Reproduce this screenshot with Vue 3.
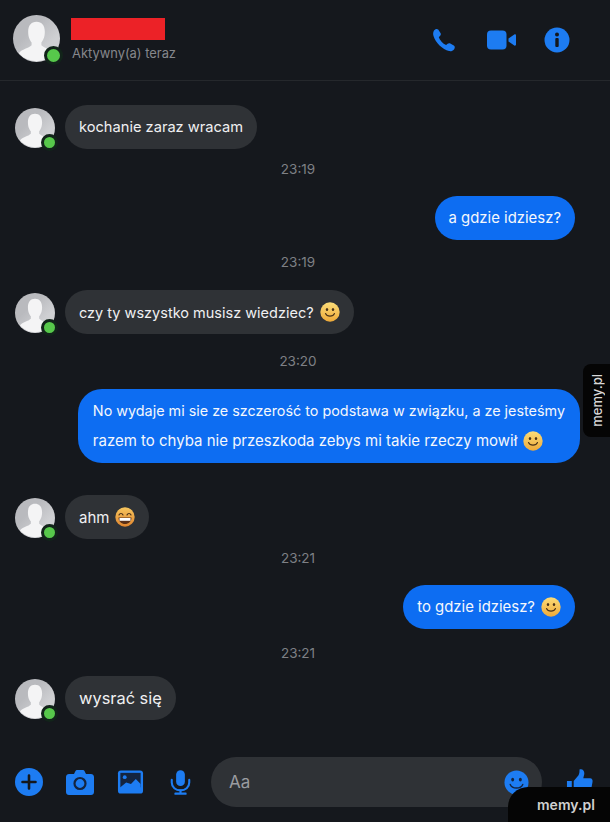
<script setup>
const messages = [
  { id: 1, type: 'in', text: 'kochanie zaraz wracam', size: 14.65, top: 24 },
  { id: 2, type: 'time', text: '23:19', top: 12 },
  { id: 3, type: 'out', text: 'a gdzie idziesz?', size: 14.9, top: 19 },
  { id: 4, type: 'time', text: '23:19', top: 14 },
  { id: 5, type: 'in', text: 'czy ty wszystko musisz wiedziec?', emoji: 'smile', size: 14.5, top: 20 },
  { id: 6, type: 'time', text: '23:20', top: 19 },
  { id: 7, type: 'out', lines: ['No wydaje mi sie ze szczerość to podstawa w związku, a ze jesteśmy', 'razem to chyba nie przeszkoda zebys mi takie rzeczy mowił'], emoji: 'smile', size: 15, firstSize: 14.36, top: 20 },
  { id: 8, type: 'in', text: 'ahm', emoji: 'grin', size: 15, top: 32 },
  { id: 9, type: 'time', text: '23:21', top: 11 },
  { id: 10, type: 'out', text: 'to gdzie idziesz?', emoji: 'smile', size: 14.9, top: 19 },
  { id: 11, type: 'time', text: '23:21', top: 16 },
  { id: 12, type: 'in', text: 'wysrać się', size: 16.4, top: 15 }
]
</script>

<template>
  <div class="screen">
    <svg class="defs" width="0" height="0">
      <defs>
        <linearGradient id="em" x1="0" y1="0" x2="0" y2="1"><stop offset="0" stop-color="#fbdc78"/><stop offset="1" stop-color="#eeaa3a"/></linearGradient>
        <linearGradient id="em2" x1="0" y1="0" x2="0" y2="1"><stop offset="0" stop-color="#f7c65e"/><stop offset="1" stop-color="#e0852e"/></linearGradient>
        <linearGradient id="sil" x1="0" y1="0" x2="1" y2="1"><stop offset="0.35" stop-color="#b9babe"/><stop offset="0.7" stop-color="#cfd0d3"/></linearGradient>
      </defs>
    </svg>
    <header class="header">
      <div class="avatar big">
        <svg viewBox="0 0 48 48" class="silhouette">
          <circle cx="24" cy="24" r="24" fill="url(#sil)" />
          <path d="M24 7c5.500 0 8.500 4 8.500 10s-2 9-3.500 11v3c3 3 10 4 13 8a24 24 0 0 1-36 0c3-4 10-5 13-8v-3c-1.500-2-3.500-5-3.500-11S18.500 7 24 7z" fill="#f4f4f5" />
        </svg>
        <span class="dot big-dot"></span>
      </div>
      <div class="who">
        <div class="redact"></div>
        <div class="status">Aktywny(a) teraz</div>
      </div>
      <div class="actions">
        <svg viewBox="0 0 26 26" class="act" fill="#1d7cf2"><path d="M3 3.500C4 2 6 1.500 7.200 2.500l2.300 3.500c.6 1 .4 2-.4 2.800L7.800 10.200c1 3 4 6.500 7.300 7.900l1.500-1.300c.8-.7 1.800-.8 2.700-.3l3.500 2.100c1.300.9 1.300 2.600.2 3.800-1.300 1.400-3 2.100-5 1.600C11.500 22.500 4.500 15.500 2.500 9c-.6-2-.4-4 .5-5.500z"/></svg>
        <svg viewBox="0 0 30 22" class="act video" fill="#1d7cf2"><rect x="0" y="1.500" width="19.500" height="19" rx="4"/><path d="M21.500 9.500l5.800-4c.8-.5 1.700 0 1.700 1v9c0 1-.9 1.500-1.700 1l-5.800-4z"/></svg>
        <svg viewBox="0 0 26 26" class="act info"><circle cx="13" cy="13" r="12.500" fill="#1d7cf2"/><circle cx="13" cy="7.600" r="2" fill="#14171c"/><rect x="11.300" y="11" width="3.400" height="9" rx="1" fill="#14171c"/></svg>
      </div>
    </header>

    <main class="chat">
      <template v-for="m in messages" :key="m.id">
        <div v-if="m.type === 'time'" class="time" :style="{ marginTop: m.top + 'px' }">{{ m.text }}</div>
        <div v-else class="row" :class="[m.type, { wide: m.lines }]" :style="{ marginTop: m.top + 'px' }">
          <div v-if="m.type === 'in'" class="avatar small">
            <svg viewBox="0 0 48 48" class="silhouette">
              <circle cx="24" cy="24" r="24" fill="url(#sil)" />
              <path d="M24 7c5.500 0 8.500 4 8.500 10s-2 9-3.500 11v3c3 3 10 4 13 8a24 24 0 0 1-36 0c3-4 10-5 13-8v-3c-1.500-2-3.500-5-3.500-11S18.500 7 24 7z" fill="#f4f4f5" />
            </svg>
            <span class="dot small-dot"></span>
          </div>
          <div class="bubble" :class="{ multi: m.lines }" :style="{ fontSize: m.size + 'px' }">
            <template v-if="m.lines">
              <div :style="{ fontSize: m.firstSize + 'px' }">{{ m.lines[0] }}</div>
              <div class="line">{{ m.lines[1] }}<svg v-if="m.emoji" class="emoji" viewBox="0 0 20 20"><circle cx="10" cy="10" r="9.700" fill="url(#em)"/><ellipse cx="7" cy="7.500" rx="1.200" ry="1.600" fill="#4a3218"/><ellipse cx="13" cy="7.500" rx="1.200" ry="1.600" fill="#4a3218"/><path d="M5.500 11.500c1.500 3.500 7.500 3.500 9 0" fill="none" stroke="#4a3218" stroke-width="1.100" stroke-linecap="round"/></svg></div>
            </template>
            <div v-else class="line">
              {{ m.text }}
              <svg v-if="m.emoji === 'smile'" class="emoji" viewBox="0 0 20 20"><circle cx="10" cy="10" r="9.700" fill="url(#em)"/><ellipse cx="7" cy="7.500" rx="1.200" ry="1.600" fill="#4a3218"/><ellipse cx="13" cy="7.500" rx="1.200" ry="1.600" fill="#4a3218"/><path d="M5.500 11.500c1.500 3.500 7.500 3.500 9 0" fill="none" stroke="#4a3218" stroke-width="1.100" stroke-linecap="round"/></svg>
              <svg v-if="m.emoji === 'grin'" class="emoji" viewBox="0 0 20 20"><circle cx="10" cy="10" r="9.700" fill="url(#em2)"/><path d="M4 8c.8-2 3.200-2 4 0M12 8c.8-2 3.200-2 4 0" fill="none" stroke="#4a3218" stroke-width="1.200" stroke-linecap="round"/><path d="M3.500 10.500h13c0 4-3 6.500-6.500 6.500s-6.500-2.500-6.500-6.500z" fill="#5a3018"/><path d="M4.500 11h11v2.800h-11z" fill="#fff"/></svg>
            </div>
          </div>
        </div>
      </template>
    </main>

    <footer class="composer">
      <svg viewBox="0 0 28 28" class="tool plus"><circle cx="14" cy="14" r="14" fill="#1d7cf2"/><path d="M14 7.500v13M7.500 14h13" stroke="#14171c" stroke-width="2.600" stroke-linecap="round"/></svg>
      <svg viewBox="0 0 28 26" class="tool camera"><path d="M3 5h5l1.500-3c.3-.6.8-1 1.500-1h6c.7 0 1.200.4 1.500 1L20 5h5c1.500 0 3 1 3 3v15c0 1.700-1.300 3-3 3H3c-1.700 0-3-1.300-3-3V8c0-2 1.500-3 3-3z" fill="#1d7cf2"/><circle cx="14" cy="14.500" r="5.500" fill="#1d7cf2" stroke="#14243f" stroke-width="2.200"/></svg>
      <svg viewBox="0 0 28 26" class="tool image"><rect x="1" y="1" width="26" height="24" rx="3" fill="#1d7cf2"/><rect x="3.500" y="3.500" width="21" height="15" fill="#14243f"/><circle cx="8" cy="8" r="2" fill="#1d7cf2"/><path d="M3.500 18.500l6-5 5 1.500 5-5 5 5v8h-21z" fill="#1d7cf2"/></svg>
      <svg viewBox="0 0 24 28" class="tool mic" fill="#1d7cf2"><rect x="7" y="0" width="10" height="18" rx="5"/><path d="M2 11v3c0 5.500 4.500 9 10 9s10-3.500 10-9v-3" fill="none" stroke="#1d7cf2" stroke-width="2.400" stroke-linecap="round"/><rect x="5" y="25.500" width="14" height="2.500" rx="1"/><rect x="10.800" y="22" width="2.400" height="4"/></svg>
      <div class="input">
        <span class="aa">Aa</span>
        <svg viewBox="0 0 26 26" class="face"><circle cx="13" cy="13" r="12.500" fill="#1d7cf2"/><ellipse cx="9" cy="10" rx="1.500" ry="2" fill="#14243f"/><ellipse cx="17" cy="10" rx="1.500" ry="2" fill="#14243f"/><path d="M6.500 15c2 5 11 5 13 0" fill="none" stroke="#14243f" stroke-width="1.500" stroke-linecap="round"/></svg>
      </div>
      <svg viewBox="0 0 28 28" class="thumb" fill="#1d7cf2"><path d="M1 13h5v14H3c-1 0-2-1-2-2z"/><path d="M8 13l5-6c1-2 1-4 1-6 3-1 5 1 5 4 0 2-1 4-1 5h7c2 0 3 2 2.500 4l-2 11c-.3 1.500-1.500 2-3 2H8z"/></svg>
    </footer>

    <div class="side-tag"><span>memy.pl</span></div>
    <div class="corner-tag">memy.pl</div>
  </div>
</template>

<style scoped>
.defs { position: absolute; }
.screen {
  position: relative;
  width: 610px;
  height: 822px;
  overflow: hidden;
  background: #15181d;
  display: flex;
  flex-direction: column;
  font-family: Inter, Roboto, "Liberation Sans", sans-serif;
  color: #f0f0f2;
}
.header {
  height: 81px;
  box-sizing: border-box;
  flex: none;
  border-bottom: 1px solid #25282c;
  display: flex;
  align-items: center;
  padding: 0 40px 3px 13px;
}
.avatar { position: relative; flex: none; }
.silhouette { display: block; width: 100%; height: 100%; }
.avatar.big { width: 47px; height: 47px; margin-right: 12px; }
.avatar.small { width: 40px; height: 40px; margin-right: 10px; margin-bottom: 1px; }
.dot {
  position: absolute;
  box-sizing: content-box;
  border-radius: 50%;
  background: #57c84b;
  border: 3px solid #12241a;
}
.big-dot { width: 13px; height: 13px; right: -3px; bottom: -3px; }
.small-dot { width: 11px; height: 11px; right: -3px; bottom: -3px; }
.who { display: flex; flex-direction: column; align-self: flex-start; padding-top: 18px; }
.redact { width: 94px; height: 22px; background: #ec2227; margin-left: -1px; }
.status { font-size: 12.900px; color: #85878c; margin-top: 6px; line-height: 16px; }
.actions { margin-left: auto; display: flex; align-items: center; padding-top: 2px; }
.act { width: 26px; height: 26px; display: block; }
.act.video { width: 30px; height: 22px; margin: 0 27px 0 30px; }
.chat { flex: 1; min-height: 0; display: flex; flex-direction: column; }
.row { display: flex; align-items: flex-end; }
.row.in { padding-left: 15px; justify-content: flex-start; }
.row.out { padding-right: 35px; justify-content: flex-end; }
.row.out.wide { padding-right: 30px; }
.bubble {
  border-radius: 22px;
  padding: 0 14px;
  min-height: 44px;
  display: flex;
  flex-direction: column;
  justify-content: center;
  background: #2f3236;
  white-space: nowrap;
}
.row.out .bubble { background: #0d6df2; color: #f4f7fc; }
.bubble.multi { line-height: 30px; padding: 7px 15px; border-radius: 24px; }
.line { display: flex; align-items: center; gap: 6px; }
.emoji { width: 20px; height: 20px; flex: none; }
.time { text-align: center; font-size: 13.500px; line-height: 17px; color: #7e8085; height: 16px; padding-right: 14px; }
.composer {
  position: absolute;
  left: 0;
  right: 0;
  top: 757px;
  height: 50px;
  display: flex;
  align-items: center;
  padding-left: 15px;
}
.tool { flex: none; }
.tool.plus { width: 28px; height: 28px; margin-right: 23px; }
.tool.camera { width: 28px; height: 26px; margin-right: 23px; }
.tool.image { width: 27px; height: 26px; margin-right: 26px; }
.tool.mic { width: 21px; height: 27px; margin-right: 20px; }
.input {
  width: 331px;
  height: 50px;
  border-radius: 25px;
  background: #2f3236;
  display: flex;
  align-items: center;
  justify-content: space-between;
  padding: 0 13px 0 18px;
  box-sizing: border-box;
  flex: none;
}
.aa { font-size: 17px; color: #9a9ca0; }
.face { width: 25px; height: 25px; }
.thumb { width: 27px; height: 28px; margin-left: 24px; flex: none; }
.side-tag {
  position: absolute;
  right: 0;
  top: 364px;
  width: 27px;
  height: 73px;
  background: #050505;
  border-radius: 8px 0 0 8px;
  display: flex;
  align-items: center;
  justify-content: center;
}
.side-tag span {
  writing-mode: vertical-rl;
  transform: rotate(180deg);
  font-size: 13px;
  font-weight: 500;
  color: #d8d8d8;
}
.corner-tag {
  position: absolute;
  right: 0;
  bottom: 0;
  width: 102px;
  height: 35px;
  background: #050505;
  border-radius: 20px 0 0 0;
  font-size: 14px;
  font-weight: 600;
  color: #d0d0d0;
  display: flex;
  align-items: center;
  box-sizing: border-box;
  padding-left: 29px;
}
</style>
